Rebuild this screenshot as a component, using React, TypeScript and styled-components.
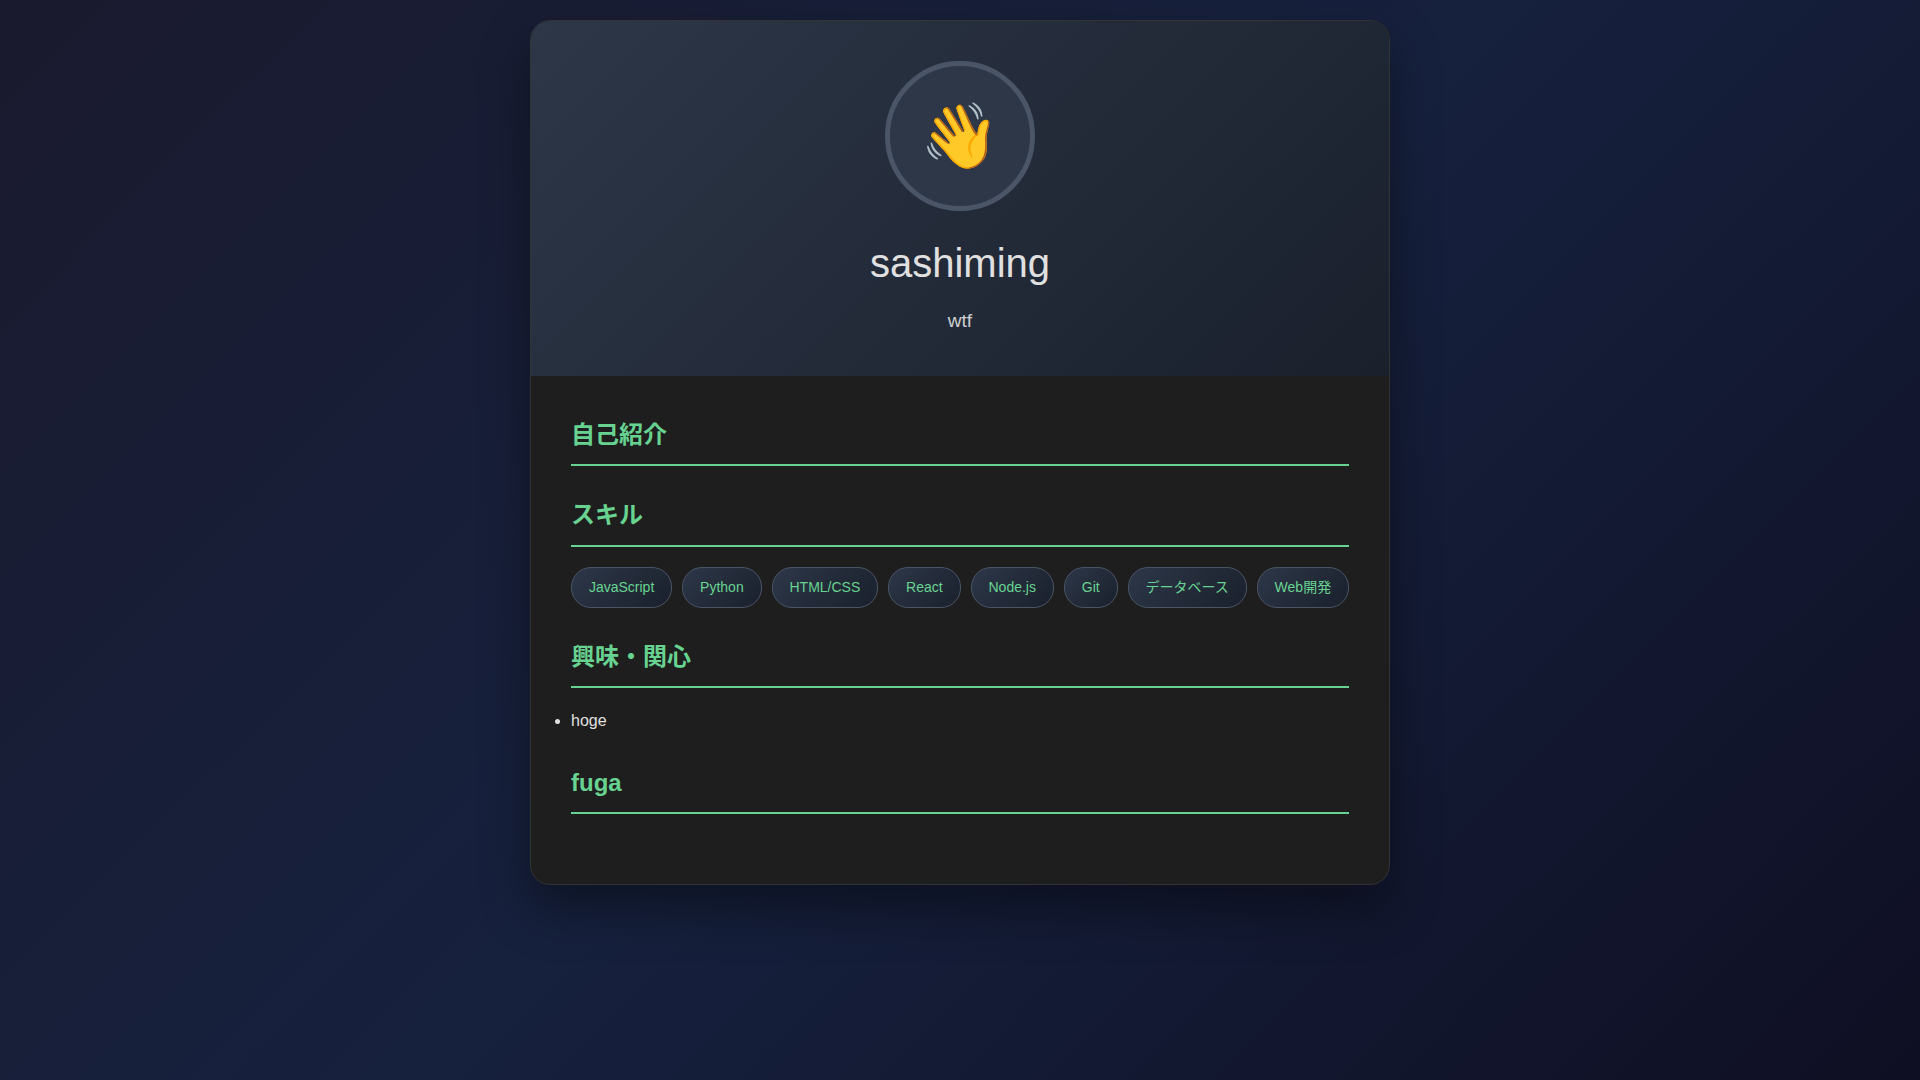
import React from "react";
import styled, { createGlobalStyle } from "styled-components";

const GlobalStyle = createGlobalStyle`
  * {
    margin: 0;
    padding: 0;
    box-sizing: border-box;
  }

  body {
    min-height: 100vh;
    padding: 20px;
    background: linear-gradient(135deg, #1a1a2e 0%, #16213e 50%, #0f0f23 100%);
    color: #e0e0e0;
    font-family: "Liberation Sans", "Noto Sans CJK JP", sans-serif;
    font-size: 16px;
    line-height: 1.6;
  }
`;

const Card = styled.main`
  max-width: 860px;
  margin: 0 auto;
  overflow: hidden;
  background: #1e1e1e;
  border: 1px solid #333;
  border-radius: 20px;
  box-shadow: 0 25px 50px rgba(0, 0, 0, 0.4);
`;

const Header = styled.header`
  padding: 40px;
  background: linear-gradient(135deg, #2d3748 0%, #1a202c 100%);
  text-align: center;
`;

const Avatar = styled.div`
  display: flex;
  align-items: center;
  justify-content: center;
  width: 150px;
  height: 150px;
  margin: 0 auto 20px;
  background: #2d3748;
  border: 5px solid #4a5568;
  border-radius: 50%;
  font-size: 64px;
`;

const Name = styled.h1`
  margin-bottom: 10px;
  font-size: 40px;
  font-weight: 300;
`;

const Tagline = styled.p`
  font-size: 19px;
  line-height: 31px;
  opacity: 0.9;
`;

const Content = styled.div`
  padding: 40px;
`;

const Section = styled.section`
  margin-bottom: 30px;
`;

const SectionTitle = styled.h2`
  margin-bottom: 20px;
  padding-bottom: 10px;
  border-bottom: 2px solid #68d391;
  color: #68d391;
  font-size: 24px;
`;

const SkillList = styled.div`
  display: flex;
  flex-wrap: wrap;
  gap: 10px;
`;

const Skill = styled.span`
  flex: 1 1 auto;
  padding: 8px 16px;
  background: linear-gradient(135deg, #2d3748 0%, #1a202c 100%);
  border: 1px solid #4a5568;
  border-radius: 20px;
  color: #68d391;
  font-size: 14px;
  line-height: 23px;
  text-align: center;
`;

const skills = [
  "JavaScript",
  "Python",
  "HTML/CSS",
  "React",
  "Node.js",
  "Git",
  "データベース",
  "Web開発",
];

const interests = ["hoge"];

export default function App() {
  return (
    <>
      <GlobalStyle />
      <Card lang="ja">
        <Header>
          <Avatar>👋</Avatar>
          <Name>sashiming</Name>
          <Tagline>wtf</Tagline>
        </Header>
        <Content>
          <Section>
            <SectionTitle>自己紹介</SectionTitle>
          </Section>
          <Section>
            <SectionTitle>スキル</SectionTitle>
            <SkillList>
              {skills.map((skill) => (
                <Skill key={skill}>{skill}</Skill>
              ))}
            </SkillList>
          </Section>
          <Section>
            <SectionTitle>興味・関心</SectionTitle>
            <ul>
              {interests.map((interest) => (
                <li key={interest}>{interest}</li>
              ))}
            </ul>
          </Section>
          <Section>
            <SectionTitle>fuga</SectionTitle>
          </Section>
        </Content>
      </Card>
    </>
  );
}
